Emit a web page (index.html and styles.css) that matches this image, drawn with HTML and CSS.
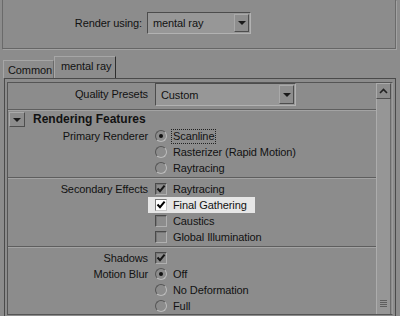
FILE: index.html
```html
<!DOCTYPE html>
<html lang="en">
<head>
    <meta charset="UTF-8">
    <title>Render Settings</title>
    <link rel="stylesheet" href="styles.css">
</head>
<body>
    <div class="top">
        <div class="render-row">
            <span class="render-lbl">Render using:</span>
            <div class="combo combo-render">
                <span class="combo-text">mental ray</span>
                <span class="combo-btn"><i class="arrow"></i></span>
            </div>
        </div>
    </div>

    <div class="tabs">
        <div class="tab">Common</div>
        <div class="tab tab-active">mental ray</div>
    </div>

    <div class="frame">
        <div class="scroll">
            <div class="content">
                <div class="row preset-row">
                    <span class="lbl">Quality Presets</span>
                    <div class="combo combo-preset">
                        <span class="combo-text">Custom</span>
                        <span class="combo-btn"><i class="arrow"></i></span>
                    </div>
                </div>
                <div class="sep"></div>

                <div class="section-head">
                    <span class="collapse-btn"><i class="arrow"></i></span>
                    <span class="section-title">Rendering Features</span>
                </div>

                <div class="row">
                    <span class="lbl">Primary Renderer</span>
                    <span class="opt"><i class="radio on"></i><span class="focus">Scanline</span></span>
                </div>
                <div class="row">
                    <span class="lbl"></span>
                    <span class="opt"><i class="radio"></i>Rasterizer (Rapid Motion)</span>
                </div>
                <div class="row">
                    <span class="lbl"></span>
                    <span class="opt"><i class="radio"></i>Raytracing</span>
                </div>
                <div class="sep sep-group"></div>

                <div class="row">
                    <span class="lbl">Secondary Effects</span>
                    <span class="opt"><i class="check on"><svg viewBox="0 0 10 10"><polyline points="1.5,4.5 4,7.2 8.6,1.6"/></svg></i>Raytracing</span>
                </div>
                <div class="row">
                    <span class="lbl"></span>
                    <span class="opt hl"><i class="check on"><svg viewBox="0 0 10 10"><polyline points="1.5,4.5 4,7.2 8.6,1.6"/></svg></i>Final Gathering</span>
                </div>
                <div class="row">
                    <span class="lbl"></span>
                    <span class="opt"><i class="check"></i>Caustics</span>
                </div>
                <div class="row">
                    <span class="lbl"></span>
                    <span class="opt"><i class="check"></i>Global Illumination</span>
                </div>
                <div class="sep sep-group"></div>

                <div class="row">
                    <span class="lbl">Shadows</span>
                    <span class="opt"><i class="check on"><svg viewBox="0 0 10 10"><polyline points="1.5,4.5 4,7.2 8.6,1.6"/></svg></i></span>
                </div>
                <div class="row">
                    <span class="lbl">Motion Blur</span>
                    <span class="opt"><i class="radio on"></i>Off</span>
                </div>
                <div class="row">
                    <span class="lbl"></span>
                    <span class="opt"><i class="radio"></i>No Deformation</span>
                </div>
                <div class="row">
                    <span class="lbl"></span>
                    <span class="opt"><i class="radio"></i>Full</span>
                </div>
            </div>

            <div class="vscroll">
                <div class="sb-btn">
                    <svg width="9" height="6" viewBox="0 0 9 6"><polyline points="1,5 4.5,1.5 8,5"/></svg>
                </div>
                <div class="sb-thumb"><div class="grip"></div></div>
            </div>
        </div>
    </div>
</body>
</html>
```

FILE: styles.css
```css
body {
    margin: 0;
    height: 316px;
    overflow: hidden;
    background-color: #8c8c8c;
    font-family: "Liberation Sans", Arial, sans-serif;
    font-size: 11px;
    letter-spacing: -0.1px;
    color: #121212;
}

/* top "Render using" panel */
.top {
    height: 48px;
    margin: 0 4px 0 2px;
    border-left: 1px solid #6a6a6a;
    border-right: 1px solid #6a6a6a;
    border-bottom: 1px solid #666;
    box-shadow: 1px 1px 0 #a2a2a2;
}

.render-row {
    display: flex;
    align-items: center;
    padding-top: 12px;
}

.render-lbl {
    width: 139px;
    margin-right: 5px;
    text-align: right;
}

.combo {
    display: flex;
    box-sizing: border-box;
    border: 1px solid;
    border-color: #4c4c4c #b2b2b2 #b2b2b2 #4c4c4c;
    background-color: #979797;
}

.combo-render {
    width: 104px;
    height: 22px;
}

.combo-preset {
    width: 141px;
    height: 23px;
}

.combo-text {
    flex: 1;
    padding-left: 5px;
    align-self: center;
}

.combo-btn {
    width: 13px;
    margin: 1px;
    border: 1px solid;
    border-color: #a9a9a9 #4e4e4e #4e4e4e #a9a9a9;
    background-color: #8e8e8e;
    display: flex;
    align-items: center;
    justify-content: center;
}

.arrow {
    width: 0;
    height: 0;
    border-left: 4px solid transparent;
    border-right: 4px solid transparent;
    border-top: 4px solid #1a1a1a;
}

/* tabs */
.tabs {
    display: flex;
    align-items: flex-end;
    height: 29px;
    padding-left: 3px;
}

.tab {
    height: 17px;
    width: 45px;
    padding-left: 4px;
    line-height: 18px;
    border-top: 1px solid #a6a6a6;
    border-left: 1px solid #a6a6a6;
    border-right: 1px solid #6a6a6a;
}

.tab-active {
    height: 21px;
    width: 54px;
    padding-left: 6px;
    line-height: 19px;
    border-right-color: #2e2e2e;
}

/* main frame */
.frame {
    height: 240px;
    margin: 0 4px;
    padding: 3px 2px 0;
    border: 1px solid #4a4a4a;
    border-bottom: none;
}

.scroll {
    display: flex;
    box-sizing: border-box;
    height: 233px;
    border: 1px solid #555;
    border-right-color: #9c9c9c;
}

.content {
    flex: 1;
}

.row {
    display: grid;
    grid-template-columns: 140px auto;
    column-gap: 7px;
    align-items: center;
    height: 16px;
}

.lbl {
    text-align: right;
    white-space: nowrap;
}

.preset-row {
    height: 24px;
    align-items: start;
}

.preset-row .lbl {
    line-height: 23px;
}

.sep {
    margin-top: 2px;
    border-top: 1px solid #5e5e5e;
    border-bottom: 1px solid #a3a3a3;
}

.sep-group {
    margin: 1px 0 2px;
}

.section-head {
    display: flex;
    align-items: flex-start;
    height: 17px;
}

.collapse-btn {
    width: 14px;
    height: 13px;
    margin: 1px 0 0 1px;
    border: 1px solid;
    border-color: #a9a9a9 #4e4e4e #4e4e4e #a9a9a9;
    display: flex;
    align-items: center;
    justify-content: center;
}

.section-title {
    margin-left: 8px;
    font-size: 12px;
    font-weight: bold;
    letter-spacing: 0;
    line-height: 17px;
}

.opt {
    display: flex;
    align-items: center;
    height: 16px;
    white-space: nowrap;
}

.radio {
    box-sizing: border-box;
    width: 12px;
    height: 12px;
    margin-right: 6px;
    border-radius: 50%;
    border: 1px solid;
    border-color: #555 #bcbcbc #bcbcbc #555;
    display: flex;
    align-items: center;
    justify-content: center;
}

.radio.on::after {
    content: "";
    width: 4px;
    height: 4px;
    border-radius: 50%;
    background-color: #111;
}

.focus {
    outline: 1px dotted #222;
    padding: 0 1px;
    margin-left: -1px;
    line-height: 13px;
}

.check {
    box-sizing: border-box;
    width: 12px;
    height: 12px;
    margin-right: 6px;
    border: 1px solid;
    border-color: #4a4a4a #b0b0b0 #b0b0b0 #4a4a4a;
    box-shadow: inset 1px 1px 0 #767676;
}

.check svg {
    display: block;
    width: 10px;
    height: 10px;
}

.check polyline {
    fill: none;
    stroke: #161616;
    stroke-width: 2;
}

.hl {
    width: max-content;
    margin-left: -7px;
    padding: 0 8px 0 7px;
    background-color: #e6e6e6;
}

.hl .check {
    background-color: #fff;
    border-color: #7a7a7a #c8c8c8 #c8c8c8 #7a7a7a;
    box-shadow: none;
}

.hl .check polyline {
    stroke: #000;
}

/* scrollbar */
.vscroll {
    width: 15px;
    margin-right: 1px;
    display: flex;
    flex-direction: column;
}

.sb-btn {
    height: 14px;
    border: 1px solid;
    border-color: #ababab #505050 #505050 #ababab;
    display: flex;
    align-items: center;
    justify-content: center;
}

.sb-btn polyline {
    fill: none;
    stroke: #222;
    stroke-width: 1.6;
}

.sb-thumb {
    flex: 1;
    display: flex;
    flex-direction: column;
    justify-content: flex-end;
    padding-bottom: 7px;
    background-color: #969696;
    border-left: 1px solid #acacac;
    border-right: 1px solid #6c6c6c;
}

.grip {
    width: 7px;
    height: 7px;
    margin: 0 auto;
    background: repeating-linear-gradient(#5e5e5e 0 1px, transparent 1px 2px);
}
```
